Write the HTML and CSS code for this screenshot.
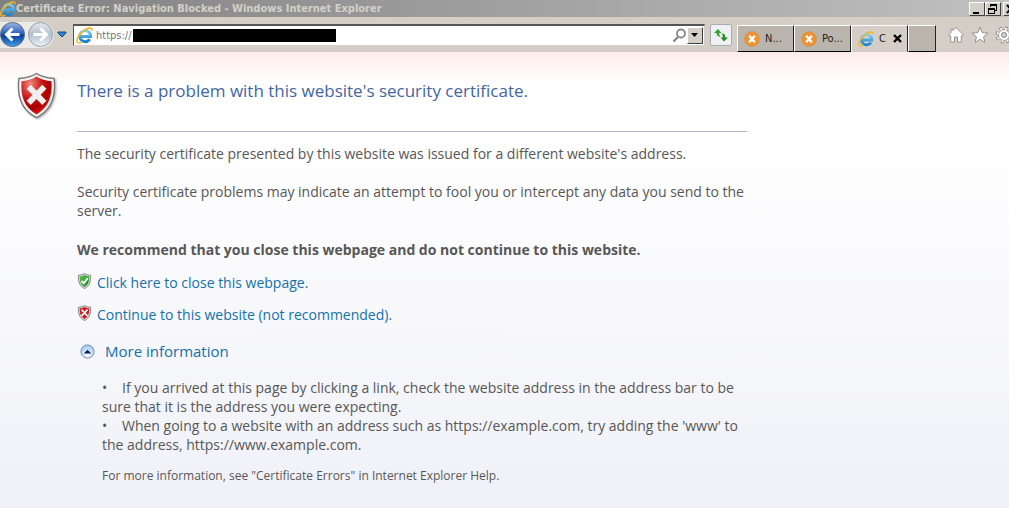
FILE: index.html
```html
<!DOCTYPE html>
<html lang="en">
<head>
	<meta charset="utf-8">
	<title>Certificate Error: Navigation Blocked</title>
	<link rel="stylesheet" href="styles.css">
</head>
<body>
	<!-- shared drawings -->
	<svg class="defs" width="0" height="0" aria-hidden="true">
		<defs>
			<linearGradient id="ieBlue" x1="0" y1="0" x2="0" y2="1">
				<stop offset="0" stop-color="#7fd0f7"/>
				<stop offset="1" stop-color="#1a7fcb"/>
			</linearGradient>
			<linearGradient id="backBlue" x1="0" y1="0" x2="0" y2="1">
				<stop offset="0" stop-color="#9cb8e4"/>
				<stop offset="0.45" stop-color="#2c62bb"/>
				<stop offset="0.55" stop-color="#0b3c9c"/>
				<stop offset="1" stop-color="#3fa4ec"/>
			</linearGradient>
			<linearGradient id="fwdGrey" x1="0" y1="0" x2="0" y2="1">
				<stop offset="0" stop-color="#e4e9f0"/>
				<stop offset="0.5" stop-color="#b4bfcd"/>
				<stop offset="1" stop-color="#eef6fb"/>
			</linearGradient>
			<radialGradient id="shieldRed" cx="0.3" cy="0.2" r="0.85">
				<stop offset="0" stop-color="#f08a80"/>
				<stop offset="0.45" stop-color="#c81414"/>
				<stop offset="0.75" stop-color="#a80000"/>
				<stop offset="1" stop-color="#e81818"/>
			</radialGradient>
			<linearGradient id="shieldGreen" x1="0" y1="0" x2="1" y2="1">
				<stop offset="0" stop-color="#5cc456"/>
				<stop offset="1" stop-color="#0a8a12"/>
			</linearGradient>
			<radialGradient id="ballBlue" cx="0.5" cy="0.8" r="0.8">
				<stop offset="0" stop-color="#ffffff"/>
				<stop offset="1" stop-color="#9cc3ee"/>
			</radialGradient>
			<symbol id="ie" viewBox="0 0 16 16">
				<path d="M13 11.400A5.200 5.200 0 1 1 13.800 9H4.500" fill="none" stroke="url(#ieBlue)" stroke-width="2.800"/>
				<path d="M1.300 14.600C-.6 12 3.500 5.500 9 2.300C12.500.4 15.300.6 15.200 3.300" fill="none" stroke="#f3b71e" stroke-width="1.500"/>
				<path d="M1.300 14.600C2.300 15.600 4 15 5.500 14" fill="none" stroke="#f3b71e" stroke-width="1.200"/>
			</symbol>
			<symbol id="orangeX" viewBox="0 0 16 16">
				<circle cx="8" cy="8" r="7.300" fill="#ee9330" stroke="#d9892f" stroke-width=".6"/>
				<path d="M5.200 4.800L10.800 11.200M10.800 4.800L5.200 11.200" stroke="#fff" stroke-width="2.400"/>
			</symbol>
			<symbol id="shieldX" viewBox="0 0 40 48">
				<path d="M20 1.500C24 4.600 31 6 38 6.600C40 24 35.500 39 20 46.500C4.500 39 0 24 2 6.600C9 6 16 4.600 20 1.500Z" fill="#f2f2f2" stroke="#777" stroke-width="1.400"/>
				<path d="M20 4.600C24.500 7.500 30 9 35.300 9.500C36.500 24 32.500 36.500 20 43.300C7.500 36.500 3.500 24 4.700 9.500C10 9 15.500 7.500 20 4.600Z" fill="url(#shieldRed)"/>
				<path d="M12 15L28 31.500M28 15L12 31.500" stroke="#efefef" stroke-width="6"/>
			</symbol>
			<symbol id="smallShieldX" viewBox="0 0 40 48">
				<path d="M20 1.500C24 4.600 31 6 38 6.600C40 24 35.500 39 20 46.500C4.500 39 0 24 2 6.600C9 6 16 4.600 20 1.500Z" fill="#d8d8d8" stroke="#777" stroke-width="2.500"/>
				<path d="M20 6C24.500 8.500 30 10 34 10.500C35 24 31.500 35.500 20 42C8.500 35.500 5 24 6 10.500C10 10 15.500 8.500 20 6Z" fill="#cc1c1c"/>
				<path d="M11 14L29 33M29 14L11 33" stroke="#fff" stroke-width="5"/>
			</symbol>
			<symbol id="shieldCheck" viewBox="0 0 40 48">
				<path d="M20 1.500C24 4.600 31 6 38 6.600C40 24 35.500 39 20 46.500C4.500 39 0 24 2 6.600C9 6 16 4.600 20 1.500Z" fill="#d8d8d8" stroke="#777" stroke-width="2.500"/>
				<path d="M20 6C24.500 8.500 30 10 34 10.500C35 24 31.500 35.500 20 42C8.500 35.500 5 24 6 10.500C10 10 15.500 8.500 20 6Z" fill="url(#shieldGreen)"/>
				<path d="M11 24L18 31L30 15" fill="none" stroke="#fff" stroke-width="6"/>
			</symbol>
		</defs>
	</svg>

	<header class="titlebar">
		<svg class="title-icon"><use href="#ie"/></svg>
		<span class="title-text">Certificate Error: Navigation Blocked - Windows Internet Explorer</span>
		<div class="window-buttons">
			<button type="button" aria-label="Minimize">
				<svg width="12" height="11"><path d="M2 8h6v2H2z"/></svg>
			</button>
			<button type="button" aria-label="Restore">
				<svg width="12" height="11"><path d="M3 0h7v7H8V6h1V2H4v1H3zM1 4h7v6H1zM2 6v3h5V6z" fill-rule="evenodd"/></svg>
			</button>
			<button class="close-window" type="button" aria-label="Close">
				<svg width="12" height="11"><path d="M2 1l7 8M9 1L2 9" stroke="#000" stroke-width="2"/></svg>
			</button>
		</div>
	</header>

	<nav class="toolbar">
		<div class="history">
			<button type="button" aria-label="Back">
				<svg width="26" height="26" viewBox="0 0 26 26">
					<circle cx="12.500" cy="12.500" r="12" fill="url(#backBlue)" stroke="#5d6c88"/>
					<path d="M19.500 12.500H7M12.500 6.500L6.500 12.500L12.500 18.500" fill="none" stroke="#fff" stroke-width="3"/>
				</svg>
			</button>
			<button type="button" aria-label="Forward">
				<svg width="26" height="26" viewBox="0 0 26 26">
					<circle cx="12.500" cy="12.500" r="12" fill="url(#fwdGrey)" stroke="#97a0ab"/>
					<path d="M5.500 12.500H18M12.500 6.500L18.500 12.500L12.500 18.500" fill="none" stroke="#fff" stroke-width="3"/>
				</svg>
			</button>
		</div>
		<button class="recent" type="button" aria-label="Recent pages">
			<svg width="10" height="7"><path d="M1 1H9V2L5 6L1 2Z" fill="#2c86cc" stroke="#174a80"/></svg>
		</button>
		<div class="address">
			<svg class="page-icon"><use href="#ie"/></svg>
			<input class="url" type="text" value="https://" aria-label="Address">
			<span class="host"></span>
			<button class="search" type="button" aria-label="Search">
				<svg width="15" height="15"><circle cx="9" cy="5.500" r="4" fill="none" stroke="#888" stroke-width="1.800"/><path d="M6 9L1.500 13.500" stroke="#888" stroke-width="2.400"/></svg>
			</button>
			<button class="drop" type="button" aria-label="Show address list">
				<svg width="8" height="4"><path d="M0 0H7L3.500 4Z"/></svg>
			</button>
		</div>
		<button class="refresh" type="button" aria-label="Refresh">
			<svg width="16" height="16" viewBox="0 0 16 16">
				<path d="M1 6L5 2L8.500 6H6.200Q6 8.500 7.500 10Q3.500 9.500 3.600 6Z" fill="#35a02c"/>
				<path d="M15 10.500L11 14.500L7.500 10.500H9.800Q10.200 8 8.500 6.500Q12.600 6.500 12.400 10.500Z" fill="#2a8a22"/>
			</svg>
		</button>
		<div class="tabs">
			<button class="tab" type="button"><svg><use href="#orangeX"/></svg><span>N...</span></button>
			<button class="tab" type="button"><svg><use href="#orangeX"/></svg><span>Po...</span></button>
			<div class="tab active">
				<svg><use href="#ie"/></svg><span class="tab-name">C</span>
				<button class="close-tab" type="button" aria-label="Close tab">
					<svg width="9" height="9"><path d="M1 1L8 8M8 1L1 8" stroke="#000" stroke-width="2.400"/></svg>
				</button>
			</div>
			<button class="tab new-tab" type="button" aria-label="New tab"></button>
		</div>
		<div class="tools">
			<button type="button" aria-label="Home">
				<svg width="18" height="18" viewBox="0 0 18 18"><path d="M9 1.500L16.500 9L15 10.300L14.300 9.800V16H10.500V11H7.500V16H3.700V9.800L3 10.300L1.500 9L4 6.500V3H6V4.500Z" fill="#fff" stroke="#959595"/></svg>
			</button>
			<button type="button" aria-label="Favorites">
				<svg width="18" height="18" viewBox="0 0 18 18"><path d="M9 1L11.200 6.700L17 7L12.500 10.800L14 16.500L9 13.300L4 16.500L5.500 10.800L1 7L6.800 6.700Z" fill="#fff" stroke="#959595"/></svg>
			</button>
			<button type="button" aria-label="Tools">
				<svg width="18" height="18" viewBox="0 0 18 18">
					<circle cx="9" cy="9" r="6.500" fill="none" stroke="#858585" stroke-width="4" stroke-dasharray="2.600 2.500"/>
					<circle cx="9" cy="9" r="5.500" fill="#fff" stroke="#959595"/>
					<circle cx="9" cy="9" r="6.500" fill="none" stroke="#fff" stroke-width="2.200" stroke-dasharray="1.800 3.300" stroke-dashoffset="-.4"/>
					<circle cx="9" cy="9" r="2.500" fill="#d4d0c8" stroke="#858585"/>
				</svg>
			</button>
		</div>
	</nav>

	<main class="page">
		<svg class="big-shield"><use href="#shieldX"/></svg>
		<div class="content">
			<h1>There is a problem with this website's security certificate.</h1>
			<hr>
			<p>The security certificate presented by this website was issued for a different website's address.</p>
			<p>Security certificate problems may indicate an attempt to fool you or intercept any data you send to the server.</p>
			<p class="advice">We recommend that you close this webpage and do not continue to this website.</p>
			<div class="choice">
				<svg><use href="#shieldCheck"/></svg>
				<a href="#close">Click here to close this webpage.</a>
			</div>
			<div class="choice">
				<svg><use href="#smallShieldX"/></svg>
				<a href="#continue">Continue to this website (not recommended).</a>
			</div>
			<div class="more">
				<svg viewBox="0 0 16 16"><circle cx="8" cy="8" r="7" fill="url(#ballBlue)" stroke="#6b87b5"/><path d="M4 10H12L8 6Z" fill="#0c1c5c"/></svg>
				<a href="#info">More information</a>
			</div>
			<div class="info" id="info">
				<ul>
					<li>If you arrived at this page by clicking a link, check the website address in the address bar to be sure that it is the address you were expecting.</li>
					<li>When going to a website with an address such as https://example.com, try adding the 'www' to the address, https://www.example.com.</li>
				</ul>
				<p class="help">For more information, see "Certificate Errors" in Internet Explorer Help.</p>
			</div>
		</div>
	</main>
</body>
</html>
```
FILE: styles.css
```css
* {
	box-sizing: border-box;
}
body {
	margin: 0;
	min-height: 100vh;
	display: flex;
	flex-direction: column;
	overflow-x: hidden;
	font-family: "Open Sans", "Noto Sans", sans-serif;
	font-size: 14px;
	color: #575757;
}
button {
	padding: 0;
	border: 0;
	background: none;
	font: inherit;
	color: inherit;
}
svg {
	display: block;
	flex: none;
}
.defs {
	position: absolute;
}

/* title bar */
.titlebar {
	display: flex;
	align-items: center;
	height: 17px;
	overflow: hidden;
	background: linear-gradient(to right, #808080, #c0c0c0);
}
.title-icon {
	width: 16px;
	height: 16px;
}
.title-text {
	flex: 1;
	font: bold 11px "DejaVu Sans Condensed", "DejaVu Sans", sans-serif;
	color: #d4d0c8;
	white-space: nowrap;
}
.window-buttons {
	display: flex;
	width: 40px;
	overflow: hidden;
}
.window-buttons button {
	flex: none;
	width: 16px;
	height: 14px;
	padding: 1px;
	background: #d4d0c8;
	border: 1px solid;
	border-color: #fff #404040 #404040 #fff;
}
.window-buttons .close-window {
	margin-left: 2px;
}

/* toolbar */
.toolbar {
	display: flex;
	align-items: center;
	height: 35px;
	background: #d4cec6;
}
.history {
	display: flex;
	gap: 2px;
	width: 54px;
	background: #eceae6;
	border-radius: 0 13px 13px 0;
}
.recent {
	margin: 0 6px 0 3px;
}
.address {
	flex: 1;
	min-width: 0;
	display: flex;
	align-items: center;
	height: 22px;
	padding: 0 1px 0 2px;
	background: #fff;
	border: 1px solid;
	border-color: #555 #d4d0c8 #d4d0c8 #555;
	border-top-width: 2px;
}
.page-icon {
	width: 17px;
	height: 17px;
}
.url {
	width: 37px;
	margin-left: 3px;
	padding: 0;
	border: 0;
	outline: 0;
	background: none;
	font: 11px "DejaVu Sans Condensed", "DejaVu Sans", sans-serif;
	color: #777;
}
.host {
	width: 203px;
	height: 13px;
	background: #000;
}
.search {
	margin-left: auto;
}
.drop {
	display: flex;
	align-items: center;
	justify-content: center;
	width: 16px;
	height: 17px;
	background: #d4d0c8;
	border: 1px solid;
	border-color: #fff #404040 #404040 #fff;
}
.refresh {
	display: flex;
	align-items: center;
	justify-content: center;
	width: 22px;
	height: 22px;
	margin: 0 5px;
	background: #eef0f3;
	border: 1px solid #a9acb2;
	border-radius: 2px;
}
.tabs {
	align-self: flex-end;
	display: flex;
	height: 27px;
}
.tab {
	display: flex;
	align-items: center;
	gap: 5px;
	width: 57px;
	padding-left: 6px;
	background: #b9b5ad;
	border: 1px solid;
	border-color: #fff #222 #000 #fff;
	font: 11px "DejaVu Sans Condensed", "DejaVu Sans", sans-serif;
	color: #222;
}
.tab > svg {
	width: 16px;
	height: 16px;
}
.tab.active {
	background: #d4cec6;
	border-bottom-color: #d4cec6;
}
.tab-name {
	flex: 1;
}
.close-tab {
	margin-right: 5px;
}
.new-tab {
	width: 28px;
}
.tools {
	display: flex;
	gap: 6px;
	width: 73px;
	padding-left: 11px;
	overflow: hidden;
}

/* error page */
.page {
	flex: 1;
	display: flex;
	align-items: flex-start;
	gap: 20px;
	padding: 20px 16px 16px;
	background: linear-gradient(to bottom, transparent 80px, #f0f1f7), linear-gradient(to bottom, #ffebeb, #fff 32px);
}
.big-shield {
	width: 41px;
	height: 47px;
	filter: drop-shadow(1px 1px 1px #aaa);
}
.content {
	flex: 0 1 670px;
	line-height: 19px;
}
h1 {
	margin: 7px 0 28px;
	font-size: 17px;
	font-weight: normal;
	line-height: 24px;
	color: #4465a2;
}
hr {
	margin: 0 0 12px;
	border: 0;
	border-top: 1px solid #b4b5c5;
}
p {
	margin: 0 0 19px;
}
.advice {
	margin: 20px 0 14px;
	font-weight: bold;
}
a {
	color: #1370ab;
	text-decoration: none;
}
.choice {
	display: flex;
	gap: 5px;
	margin-bottom: 13px;
}
.choice svg {
	width: 15px;
	height: 16px;
}
.more {
	display: flex;
	align-items: center;
	gap: 10px;
	padding: 5px 0 0 3px;
	font-size: 15px;
}
.more svg {
	width: 15px;
	height: 15px;
}
.info {
	padding: 17px 0 0 25px;
}
ul {
	margin: 0 0 12px;
	padding: 0;
	list-style: none;
}
li::before {
	content: "•";
	display: inline-block;
	width: 20px;
}
.help {
	margin: 0;
	font-size: 12px;
}
```
